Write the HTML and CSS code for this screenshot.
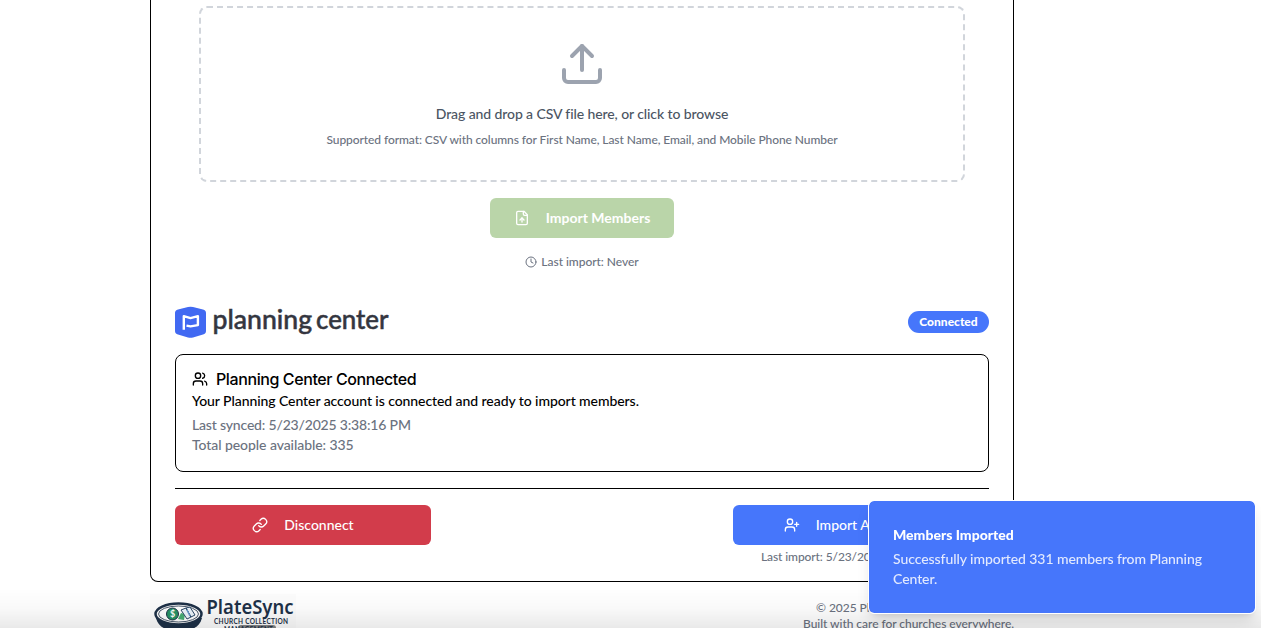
FILE: index.html
```html
<!DOCTYPE html>
<html lang="en">
<head>
<meta charset="utf-8">
<title>PlateSync</title>
<link rel="stylesheet" href="styles.css">
</head>
<body>
<main class="page">
  <section class="card">
    <div class="dropzone">
      <svg class="upload" viewBox="0 0 24 24"><path d="M21 15v4a2 2 0 0 1-2 2H5a2 2 0 0 1-2-2v-4"/><path d="m17 8-5-5-5 5"/><path d="M12 3v12"/></svg>
      <p class="drop-title">Drag and drop a CSV file here, or click to browse</p>
      <p class="drop-hint">Supported format: CSV with columns for First Name, Last Name, Email, and Mobile Phone Number</p>
    </div>
    <button class="btn btn-import">
      <svg class="icon" viewBox="0 0 24 24"><path d="M15 2H6a2 2 0 0 0-2 2v16a2 2 0 0 0 2 2h12a2 2 0 0 0 2-2V7Z"/><path d="M14 2v4a2 2 0 0 0 2 2h4"/><path d="M12 12v6"/><path d="m15 15-3-3-3 3"/></svg>
      <span>Import Members</span>
    </button>
    <p class="last-import">
      <svg class="clock" viewBox="0 0 24 24"><circle cx="12" cy="12" r="10"/><path d="M12 6v6l4 2"/></svg>
      <span>Last import: Never</span>
    </p>
    <header class="pc-head">
      <svg class="pc-logo" viewBox="0 0 216 32">
        <path d="M3 3.400 Q0 4.100 0 7 V25 Q0 27.900 3 28.600 L13 31.500 Q15.500 32.200 18 31.500 L28 28.600 Q31 27.900 31 25 V7 Q31 4.100 28 3.400 L18 1.100 Q15.500 .4 13 1.100Z" fill="#4169f2"/>
        <path d="M8.800 23.800V10.200l6.700 1.900 7.400-1.900v8.900l-7.400 1.300-4-.8" fill="none" stroke="#fff" stroke-width="2.400" stroke-linejoin="round"/>
        <text x="37.500" y="23" textLength="99.500" lengthAdjust="spacingAndGlyphs" class="pc-word">planning</text>
        <text x="141" y="23" textLength="72.500" lengthAdjust="spacingAndGlyphs" class="pc-word">center</text>
      </svg>
      <span class="badge">Connected</span>
    </header>
    <div class="status">
      <h5 class="status-title">
        <svg class="icon" viewBox="0 0 24 24"><path d="M16 21v-2a4 4 0 0 0-4-4H6a4 4 0 0 0-4 4v2"/><circle cx="9" cy="7" r="4"/><path d="M22 21v-2a4 4 0 0 0-3-3.870"/><path d="M16 3.130a4 4 0 0 1 0 7.750"/></svg>
        <span>Planning Center Connected</span>
      </h5>
      <p class="status-desc">Your Planning Center account is connected and ready to import members.</p>
      <p class="status-meta synced">Last synced: 5/23/2025 3:38:16 PM</p>
      <p class="status-meta">Total people available: 335</p>
    </div>
    <div class="actions">
      <button class="btn btn-disconnect">
        <svg class="icon" viewBox="0 0 24 24"><path d="M10 13a5 5 0 0 0 7.540.54l3-3a5 5 0 0 0-7.070-7.070l-1.720 1.710"/><path d="M14 11a5 5 0 0 0-7.540-.54l-3 3a5 5 0 0 0 7.070 7.070l1.710-1.710"/></svg>
        <span>Disconnect</span>
      </button>
      <div class="import-col">
        <button class="btn btn-all">
          <svg class="icon" viewBox="0 0 24 24"><path d="M16 21v-2a4 4 0 0 0-4-4H6a4 4 0 0 0-4 4v2"/><circle cx="9" cy="7" r="4"/><path d="M19 8v6M22 11h-6"/></svg>
          <span>Import All Members</span>
        </button>
        <p class="import-note">Last import: 5/23/2025 3:38:16 PM</p>
      </div>
    </div>
  </section>
  <footer class="footer">
    <svg class="ps-logo" viewBox="0 0 146 44">
      <rect width="146" height="44" fill="#fcfcfc"/>
      <path d="M6 24c2 8 8 11 14 12h18c6-1 12-4 14-12z" fill="#1e3148"/>
      <ellipse cx="28.500" cy="20" rx="23" ry="10.500" fill="#fafafa" stroke="#1e3148" stroke-width="2.500"/>
      <ellipse cx="28.500" cy="20" rx="20" ry="8" fill="#fff" stroke="#1e3148" stroke-width=".8"/>
      <path d="m28 25 3-6 4 1-1 6z" fill="#47ae74"/>
      <path d="m31 16 5-2 5 9-4 2zM36 14l4-1 5 8-4 2z" fill="#edf5fb" stroke="#294766"/>
      <path d="m37 16 3 6" stroke="#6a9bcd" stroke-width="1.500"/>
      <circle cx="22.500" cy="20" r="6" fill="#279365" stroke="#1e3148"/>
      <text x="22.500" y="23.200" text-anchor="middle" class="coin">$</text>
      <text x="56.500" y="20" textLength="87" lengthAdjust="spacingAndGlyphs" class="ps-word">PlateSync</text>
      <rect x="88" y="31" width="38" height="9" rx="3" fill="#858585"/>
      <text x="64" y="30" textLength="74" class="ps-sub">CHURCH COLLECTION</text>
      <text x="74" y="38" textLength="49" class="ps-sub">MANAGEMENT</text>
    </svg>
    <div class="legal">
      <p class="copyright">© 2025 PlateSync. All rights reserved.</p>
      <p class="built">Built with care for churches everywhere.</p>
    </div>
  </footer>
</main>
<div class="fade"></div>
<aside class="toast">
  <p class="toast-title">Members Imported</p>
  <p class="toast-text">Successfully imported 331 members from Planning Center.</p>
</aside>
</body>
</html>
```
FILE: styles.css
```css
* { box-sizing: border-box; }
html, body { height: 100%; }
body { margin: 0; overflow: hidden; background: #fff; color: #000; font: 500 14px/20px Lato, sans-serif; }
p, h5 { margin: 0; }
svg { display: block; flex: none; }
.page { width: 864px; margin-left: 150px; height: 628px; overflow: hidden; }
.card { height: 582px; padding: 6px 24px 0; border: 1px solid #000; border-top: 0; border-radius: 0 0 8px 8px; display: flex; flex-direction: column; }
.dropzone { height: 176px; margin: 0 24px; padding: 32px 0; border: 2px dashed #d1d5db; border-radius: 8px; display: flex; flex-direction: column; align-items: center; }
.upload { width: 48px; height: 48px; margin-bottom: 16px; stroke: #9ca3af; }
.upload, .icon, .clock { fill: none; stroke-width: 2; stroke-linecap: round; stroke-linejoin: round; }
.drop-title { color: #4b5563; letter-spacing: -.1px; }
.drop-hint { margin-top: 8px; font-size: 12px; line-height: 16px; color: #6b7280; letter-spacing: -.077px; }
.btn { height: 40px; padding: 0; border: 0; border-radius: 6px; color: #fff; font: 500 14px/20px Lato, sans-serif; display: flex; align-items: center; justify-content: center; gap: 16px; }
.icon { width: 16px; height: 16px; stroke: currentColor; }
.btn-import { width: 184px; margin: 16px auto 0; background: #bad5a9; font-weight: 700; }
.last-import { margin-top: 16px; height: 16px; font-size: 12px; line-height: 16px; color: #6b7280; letter-spacing: -.04px; display: flex; justify-content: center; align-items: center; gap: 4px; }
.clock { width: 12px; height: 12px; stroke: currentColor; }
.pc-head { height: 32px; margin-top: 36px; display: flex; justify-content: space-between; align-items: center; }
.pc-logo { width: 216px; height: 32px; overflow: visible; }
.pc-word { font: 500 26px Lato, sans-serif; fill: #34363f; stroke: #34363f; stroke-width: .5; }
.badge { width: 81px; height: 22px; border-radius: 11px; background: #4676fb; color: #fff; font-size: 12px; line-height: 22px; font-weight: 900; text-align: center; }
.status { height: 118px; margin-top: 16px; padding: 16px; border: 1px solid #000; border-radius: 8px; }
.status-title { height: 16px; display: flex; align-items: center; gap: 8px; font: 500 16px/16px Inter, sans-serif; letter-spacing: -.4px; }
.status-desc { margin-top: 4px; letter-spacing: -.07px; }
.status-meta { color: #6b7280; letter-spacing: -.07px; }
.synced { margin-top: 4px; letter-spacing: -.18px; }
.actions { margin-top: 16px; padding-top: 16px; border-top: 1px solid #000; display: flex; justify-content: space-between; }
.btn-disconnect { width: 256px; background: #d23c4b; }
.import-col { width: 256px; }
.btn-all { width: 256px; background: #4676fb; }
.import-note { margin-top: 4px; padding-left: 28px; font-size: 12px; line-height: 16px; color: #6b7280; letter-spacing: -.1px; white-space: nowrap; }
.footer { display: flex; justify-content: space-between; padding-top: 12px; }
.ps-logo { width: 146px; height: 44px; }
.coin { font: 700 9px Lato, sans-serif; fill: #fff; }
.ps-word { font: 600 19px "Noto Sans", sans-serif; fill: #1e3148; }
.ps-sub { font: 700 6.500px Lato, sans-serif; fill: #1e3148; }
.legal { width: 211px; padding-top: 6px; font-size: 12px; line-height: 16px; color: #6b7280; letter-spacing: -.04px; white-space: nowrap; }
.copyright { padding-left: 13px; }
.fade { position: fixed; left: 0; right: 0; bottom: 0; height: 40px; background: linear-gradient(rgba(0,0,0,0), rgba(0,0,0,.022) 50%, rgba(0,0,0,.085)); }
.toast { position: fixed; left: 868px; top: 500px; width: 388px; height: 114px; padding: 24px; border: 1px solid #fff; border-radius: 6px; background: #4676fb; background-clip: padding-box; color: #fff; box-shadow: 0 10px 15px -3px rgba(0,0,0,.12), 0 4px 6px -4px rgba(0,0,0,.12); }
.toast-title { font-weight: 900; }
.toast-text { margin-top: 4px; color: #e2e9fe; letter-spacing: -.065px; }
```
